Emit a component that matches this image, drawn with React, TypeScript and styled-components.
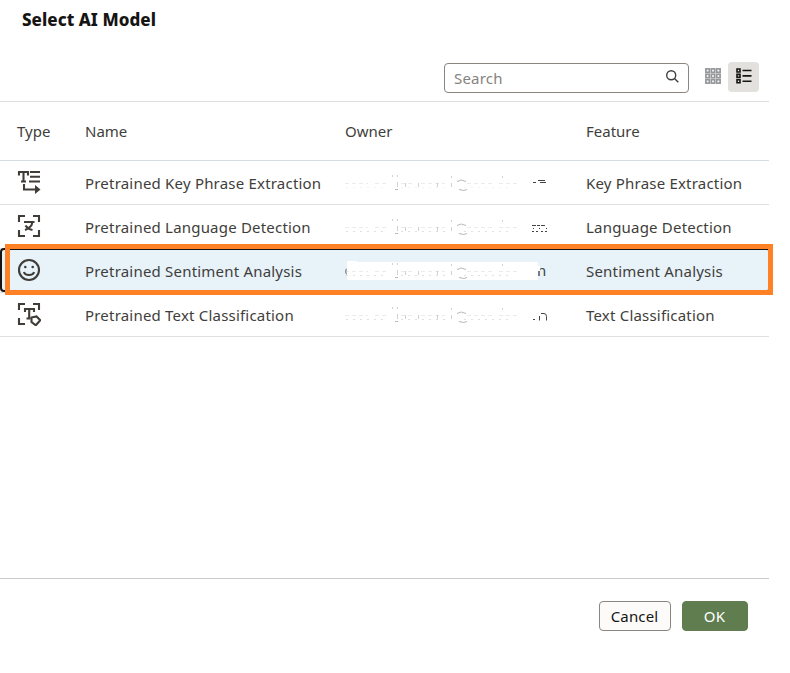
import React from "react";
import styled, { createGlobalStyle } from "styled-components";

const GlobalStyle = createGlobalStyle`
  * { box-sizing: border-box; }
  body { margin: 0; background: #fff; overflow: hidden; }
  button, input { font: inherit; }
`;

const Dialog = styled.main`
  width: 769px;
  height: 673px;
  display: flex;
  flex-direction: column;
  color: #403e3b;
  font: 15px/20px "Noto Sans", "Open Sans", sans-serif;
`;

const Title = styled.h1`
  height: 40px;
  margin: 0;
  padding: 9px 0 0 22px;
  color: #161513;
  font-size: 17px;
  line-height: 22px;
  font-weight: 800;
  letter-spacing: 0.05px;
`;

const Toolbar = styled.div`
  height: 62px;
  padding: 22px 10px 0 0;
  display: flex;
  justify-content: flex-end;
  border-bottom: 1px solid #dfdfdf;
`;

const SearchBox = styled.label`
  width: 245px;
  height: 30px;
  margin: 1px 8px 0 0;
  padding: 0 8px;
  display: flex;
  align-items: center;
  border: 1px solid #8b8580;
  border-radius: 4px;
`;

const SearchInput = styled.input`
  flex: 1;
  min-width: 0;
  padding: 0 0 0 1px;
  border: 0;
  outline: 0;
  color: #403e3b;
  background: transparent;
  letter-spacing: 0.2px;
  &::placeholder { color: #85827e; opacity: 1; }
`;

const ViewButton = styled.button<{ $active?: boolean }>`
  width: 31px;
  height: 30px;
  padding: 0 0 2px;
  display: flex;
  align-items: center;
  justify-content: center;
  border: 0;
  border-radius: 4px;
  color: ${({ $active }) => ($active ? "#161513" : "#96989a")};
  background: ${({ $active }) => ($active ? "#e2e1dd" : "transparent")};
`;

const Row = styled.div<{ $header?: boolean; $selected?: boolean }>`
  position: relative;
  height: ${({ $header }) => ($header ? 59 : 44)}px;
  display: grid;
  grid-template-columns: 85px 260px 241px 1fr;
  align-items: center;
  border-bottom: 1px solid ${({ $header }) => ($header ? "#d4dde4" : "#dfdfdf")};
  background: ${({ $selected }) => ($selected ? "#e7f2f9" : "transparent")};
`;

const Cell = styled.div<{ $type?: boolean }>`
  padding: ${({ $type }) => ($type ? "0 0 2px 17px" : "0")};
  letter-spacing: 0.2px;
  white-space: nowrap;
  svg { display: block; }
`;

const HeaderCell = styled(Cell)`
  padding-top: 0;
  padding-bottom: 0;
  letter-spacing: 0;
`;

const FocusOutline = styled.div`
  position: absolute;
  inset: -1px -2px 0 0;
  border: 2px solid #161513;
  border-radius: 4px;
`;

const Highlight = styled.div`
  position: absolute;
  top: -5px;
  left: 5px;
  width: 768px;
  height: 51px;
  border: 5px solid #ff8126;
`;

const Owner = styled.div`
  width: 205px;
  height: 20px;
  overflow: hidden;
  letter-spacing: 0;
  svg { display: block; }
`;

const Content = styled.section`
  height: 477px;
  flex: none;
  border-bottom: 1px solid #cacaca;
`;

const Footer = styled.footer`
  padding: 22px 21px 0 0;
  display: flex;
  justify-content: flex-end;
  gap: 11px;
`;

const Action = styled.button<{ $primary?: boolean }>`
  width: ${({ $primary }) => ($primary ? 66 : 72)}px;
  height: 30px;
  padding: 0 1px 1px 0;
  border: 1px solid ${({ $primary }) => ($primary ? "#5f7d4f" : "#8b8580")};
  border-radius: 4px;
  letter-spacing: 0.15px;
  color: ${({ $primary }) => ($primary ? "#fff" : "#161513")};
  background: ${({ $primary }) => ($primary ? "#5f7d4f" : "#fcfbfa")};
`;

type Kind = "phrase" | "language" | "sentiment" | "classification";

function TypeIcon({ kind }: { kind: Kind }) {
  return (
    <svg width="24" height="24" viewBox="0 0 24 24" fill="none" stroke="#403c38" strokeWidth="2.1">
      {kind === "phrase" && (
        <>
          <path d="M2 5.5V2h9v3.5M6.5 2v9M4 11.5h5M13 2h10M13 6.8h10M12 11.5h11M7 14v5.5h13" />
          <path d="m18 15 5.5 4.5L18 24Z" fill="#403c38" stroke="none" />
        </>
      )}
      {kind === "language" && (
        <path d="M2 8V2h6M16 2h6v6M22 16v6h-6M8 22H2v-6M7 8h10.5M15 8v1.5c0 2.5-4 5.5-7 6.5M8.5 11.5c1.5 2.5 4 4 7 4.5" />
      )}
      {kind === "sentiment" && (
        <>
          <circle cx="12" cy="12" r="10" />
          <path d="M7 14c1 4 9 4 10 0" />
          <circle cx="8.3" cy="9" r="1.3" fill="#403c38" stroke="none" />
          <circle cx="15.7" cy="9" r="1.3" fill="#403c38" stroke="none" />
        </>
      )}
      {kind === "classification" && (
        <>
          <path d="M2 8V2h6M16 2h6v6M8 22H2v-6M8 10V7h9v3M12.2 7v9M9.5 16.5h4" />
          <path d="m14.5 15.5 5-1 3.8 3.8-4.5 5-4.3-3.3Z" />
        </>
      )}
    </svg>
  );
}

/* A redacted address: a cover with the faint specks left around it. */
function RedactedOwner({ row }: { row: number }) {
  const selected = row === 2;
  return (
    <Owner aria-label="Redacted owner">
      <svg width="205" height="20" viewBox="0 0 205 20" fill="none">
        {selected && (
          <>
            <path d="M3 7c-3 1-3 6 0 7" stroke="#555" />
            <text x="192" y="15" fontSize="15" fill="#444">n</text>
            <path d="M2 0h10v1h181v4h2v5h-2v9H2Z" fill="#fff" />
          </>
        )}
        <g stroke="#999" strokeWidth="1">
          <path d="M0 10.5h23m7 0h14m12 0h14m6 0h24m22 0h25m7 0h18" strokeDasharray="4 3" opacity=".2" />
          <path d="M1 14.5h42m13 0h45m18 0h45" strokeDasharray="2 5" opacity={row === 0 ? ".12" : ".3"} />
          <path d="M47.5 2v2m5-2v2m0 5v5m8-4v4m13-4v4m19-4v4m14-11v2m0 5v4m51-11v2" opacity=".45" />
          <path d="M50 16.5h3m59-8q4-3 9 0m-7 8q5 2 8 0" opacity=".7" />
        </g>
        {row !== 2 && (
          <g stroke="#444">
            {row === 0 && <path d="M188 9.5h3m2-2h5m-3 2h4m-2-2h3m-1 2h2" />}
            {row === 1 && <path d="M187 8.5h4m1 0h3m1 0h4M187 14.5h2m2 0h2m3 0h2m2 0h2M188 11.5h1m5 0h1m6 0h1" />}
            {row === 3 && <path d="M196 8.5h3q2.5 0 2.5 3v4M194.5 11v4.500M188 14.500h2" />}
          </g>
        )}
      </svg>
    </Owner>
  );
}

const models: { kind: Kind; name: string; feature: string }[] = [
  { kind: "phrase", name: "Pretrained Key Phrase Extraction", feature: "Key Phrase Extraction" },
  { kind: "language", name: "Pretrained Language Detection", feature: "Language Detection" },
  { kind: "sentiment", name: "Pretrained Sentiment Analysis", feature: "Sentiment Analysis" },
  { kind: "classification", name: "Pretrained Text Classification", feature: "Text Classification" },
];

export default function App() {
  return (
    <>
      <GlobalStyle />
      <Dialog>
        <Title>Select AI Model</Title>
        <Toolbar>
          <SearchBox>
            <SearchInput placeholder="Search" />
            <svg width="16" height="16" viewBox="0 0 16 16" fill="none" stroke="#403e3b" strokeWidth="1.4">
              <circle cx="7.2" cy="5.2" r="4.5" />
              <path d="m10.500 8.500 3.800 3.800" />
            </svg>
          </SearchBox>
          <ViewButton aria-label="Grid view">
            <svg width="16" height="16" viewBox="0 0 16 16" fill="none" stroke="currentColor" strokeWidth="1.7">
              {[0, 1, 2].map((y) => [0, 1, 2].map((x) => (
                <rect key={`${x}-${y}`} x={0.9 + x * 5.4} y={0.9 + y * 5.4} width="3.4" height="3.4" />
              )))}
            </svg>
          </ViewButton>
          <ViewButton $active aria-label="List view">
            <svg width="16" height="16" viewBox="0 0 16 16" fill="none" stroke="currentColor" strokeWidth="1.6">
              <path d="M1 1h3v3H1ZM1 6.4h3v3H1ZM1 11.8h3v3H1ZM6.5 2.5h9M6.5 7.9h9M6.5 13.3h9" />
            </svg>
          </ViewButton>
        </Toolbar>
        <Content>
          <Row $header>
            <HeaderCell $type>Type</HeaderCell>
            <HeaderCell>Name</HeaderCell>
            <HeaderCell>Owner</HeaderCell>
            <HeaderCell>Feature</HeaderCell>
          </Row>
          {models.map((model, index) => (
            <Row key={model.kind} $selected={index === 2}>
              <Cell $type><TypeIcon kind={model.kind} /></Cell>
              <Cell>{model.name}</Cell>
              <Cell><RedactedOwner row={index} /></Cell>
              <Cell>{model.feature}</Cell>
              {index === 2 && <><FocusOutline /><Highlight /></>}
            </Row>
          ))}
        </Content>
        <Footer>
          <Action>Cancel</Action>
          <Action $primary>OK</Action>
        </Footer>
      </Dialog>
    </>
  );
}
